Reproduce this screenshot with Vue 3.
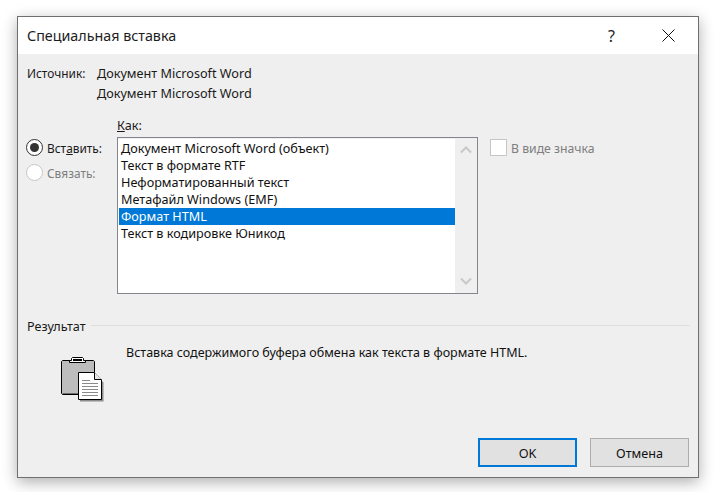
<script setup>
const formats = [
  'Документ Microsoft Word (объект)',
  'Текст в формате RTF',
  'Неформатированный текст',
  'Метафайл Windows (EMF)',
  'Формат HTML',
  'Текст в кодировке Юникод'
]
const selected = 4
</script>

<template>
  <div class="page">
    <div class="dialog">
      <header class="titlebar">
        <span class="title">Специальная вставка</span>
        <span class="help">?</span>
        <svg class="close" width="13" height="13" viewBox="0 0 13 13">
          <path d="M0.5 0.5L12.5 12.5M12.5 0.5L0.5 12.5" stroke="#111" stroke-width="1" fill="none" />
        </svg>
      </header>
      <div class="body">
        <div class="source">
          <span class="source-label">Источник:</span>
          <div class="source-values">
            <span>Документ Microsoft Word</span>
            <span>Документ Microsoft Word</span>
          </div>
        </div>
        <div class="paste">
          <div class="radios">
            <div class="radio-row">
              <span class="radio on"><span class="dot"></span></span>
              <span>Вст<u>а</u>вить:</span>
            </div>
            <div class="radio-row disabled">
              <span class="radio"></span>
              <span>Связать:</span>
            </div>
          </div>
          <div class="as">
            <div class="as-label"><u>К</u>ак:</div>
            <div class="listbox">
              <ul class="items">
                <li v-for="(f, i) in formats" :key="f" :class="{ sel: i === selected }">{{ f }}</li>
              </ul>
              <div class="scroll">
                <svg width="12" height="8" viewBox="0 0 12 8"><path d="M1 6.500L6 1.500L11 6.500" stroke="#c8c8c8" stroke-width="2" fill="none" /></svg>
                <svg width="12" height="8" viewBox="0 0 12 8"><path d="M1 1.500L6 6.500L11 1.500" stroke="#c8c8c8" stroke-width="2" fill="none" /></svg>
              </div>
            </div>
          </div>
          <div class="icon-option">
            <span class="check"></span>
            <span class="check-label">В виде значка</span>
          </div>
        </div>
        <div class="result-head">
          <span>Результат</span>
          <span class="rule"></span>
        </div>
        <div class="result">
          <svg class="clip" width="44" height="46" viewBox="0 0 44 46">
            <path d="M2.500 3.500H33.500L34.500 4.500V36.500L33.500 37.500H2.500L1.500 36.500V4.500Z" fill="#bdbdbd" stroke="#000" stroke-width="1" />
            <path d="M2.500 36.500H33.500" stroke="#6e6e6e" stroke-width="1" fill="none" />
            <path d="M9.500 5.500V3.500H11.500V1.500L12.500 0.500H22.500L23.500 1.500V3.500H25.500V5.500Z" fill="#fff" stroke="#000" stroke-width="1" />
            <rect x="13" y="2" width="9" height="2" fill="#000" />
            <path d="M20 17H35L43.500 25.500V44.500H20Z" fill="#8c8c8c" />
            <path d="M18.500 15.500H34L41.500 23V42.500H18.500Z" fill="#fff" stroke="#000" stroke-width="1" />
            <path d="M34.500 15.500V22.500H41.500" fill="#e6e6e6" stroke="#000" stroke-width="1" />
            <path d="M22 23.500H30M22 26.500H38M22 29.500H38M22 32.500H38M22 35.500H38M22 38.500H38" stroke="#8a8a8a" stroke-width="1" />
          </svg>
          <span class="result-text">Вставка содержимого буфера обмена как текста в формате HTML.</span>
        </div>
        <footer class="buttons">
          <button class="btn default">OK</button>
          <button class="btn">Отмена</button>
        </footer>
      </div>
    </div>
  </div>
</template>

<style>
html, body { margin: 0; background: #fff; }
</style>

<style scoped>
.page {
  width: 717px;
  height: 492px;
  overflow: hidden;
  padding: 16px 0 0 17px;
  box-sizing: border-box;
  font-family: "Noto Sans", "Open Sans", sans-serif;
  font-size: 12.650px;
  color: #1a1a1a;
}
.dialog {
  width: 682px;
  height: 462px;
  box-sizing: border-box;
  border: 1px solid #6f6f6f;
  background: #efefef;
  box-shadow: 0 4px 14px rgba(0, 0, 0, 0.32);
  display: flex;
  flex-direction: column;
}
.titlebar {
  height: 37px;
  flex: none;
  background: #fff;
  display: flex;
  align-items: center;
  padding-left: 9px;
}
.title { font-size: 14.300px; flex: 1; color: #1c1c1c; margin-top: -1px; }
.help { font-size: 16px; margin-right: 47px; color: #222; }
.close { margin-right: 23px; }
.body { flex: 1; display: flex; flex-direction: column; padding: 0 7px 0 9px; }
.source { display: flex; margin-top: 9px; line-height: 20px; }
.source-label { width: 70px; flex: none; font-size: 11.900px; }
.source-values { display: flex; flex-direction: column; }
.paste { display: flex; margin-top: 14px; height: 178px; }
.radios { width: 90px; margin-top: 18px; margin-left: -1px; margin-right: 1px; font-size: 11.900px; }
.radio-row { display: flex; align-items: center; gap: 4px; height: 25px; }
.radio-row.disabled { color: #7e7e7e; }
.radio {
  width: 15px;
  height: 15px;
  border-radius: 50%;
  border: 1px solid #c6c6c6;
  background: #fff;
  display: flex;
  align-items: center;
  justify-content: center;
  flex: none;
}
.radio.on { border-color: #333; }
.dot { width: 9px; height: 9px; border-radius: 50%; background: #333; }
.as-label { line-height: 17px; height: 20px; }
.listbox {
  width: 361px;
  height: 157px;
  box-sizing: border-box;
  border: 1px solid #85858f;
  background: #efefef;
  display: flex;
}
.items {
  list-style: none;
  margin: 0;
  padding: 1px 0 0 1px;
  width: 337px;
  background: #fff;
  box-sizing: border-box;
  height: 154px;
  margin-top: 1px;
  color: #111;
}
.items li { height: 17px; line-height: 17px; padding-left: 2px; white-space: nowrap; }
.items li.sel { background: #0078d7; color: #fff; }
.scroll {
  flex: 1;
  display: flex;
  flex-direction: column;
  justify-content: space-between;
  align-items: center;
  padding: 8px 0 8px;
}
.icon-option { display: flex; align-items: flex-start; gap: 5px; margin-left: 12px; margin-top: 21px; color: #7e7e7e; line-height: 17px; }
.check { width: 15px; height: 15px; border: 1px solid #c6c6c6; background: #fff; flex: none; margin-top: 1px; }
.check-label { margin-top: 2px; margin-left: -1px; font-size: 12.250px; }
.result-head { display: flex; align-items: center; gap: 5px; margin-top: 21px; height: 20px; }
.rule { flex: 1; height: 1px; background: #dedede; margin-right: 1px; margin-top: -1px; }
.result { display: flex; align-items: flex-start; margin-left: 33px; margin-top: 8px; height: 94px; }
.clip { margin-top: 13px; flex: none; }
.result-text { margin-left: 22px; line-height: 20px; color: #111; margin-top: -1px; font-size: 12.520px; white-space: nowrap; }
.buttons { display: flex; justify-content: flex-end; gap: 13px; margin-top: 0; padding-right: 2px; }
.btn {
  width: 99px;
  height: 29px;
  box-sizing: border-box;
  border: 1px solid #adadad;
  background: #e1e1e1;
  font: inherit;
  color: #111;
  padding: 0;
}
.btn.default { border: 2px solid #0078d7; }
</style>
